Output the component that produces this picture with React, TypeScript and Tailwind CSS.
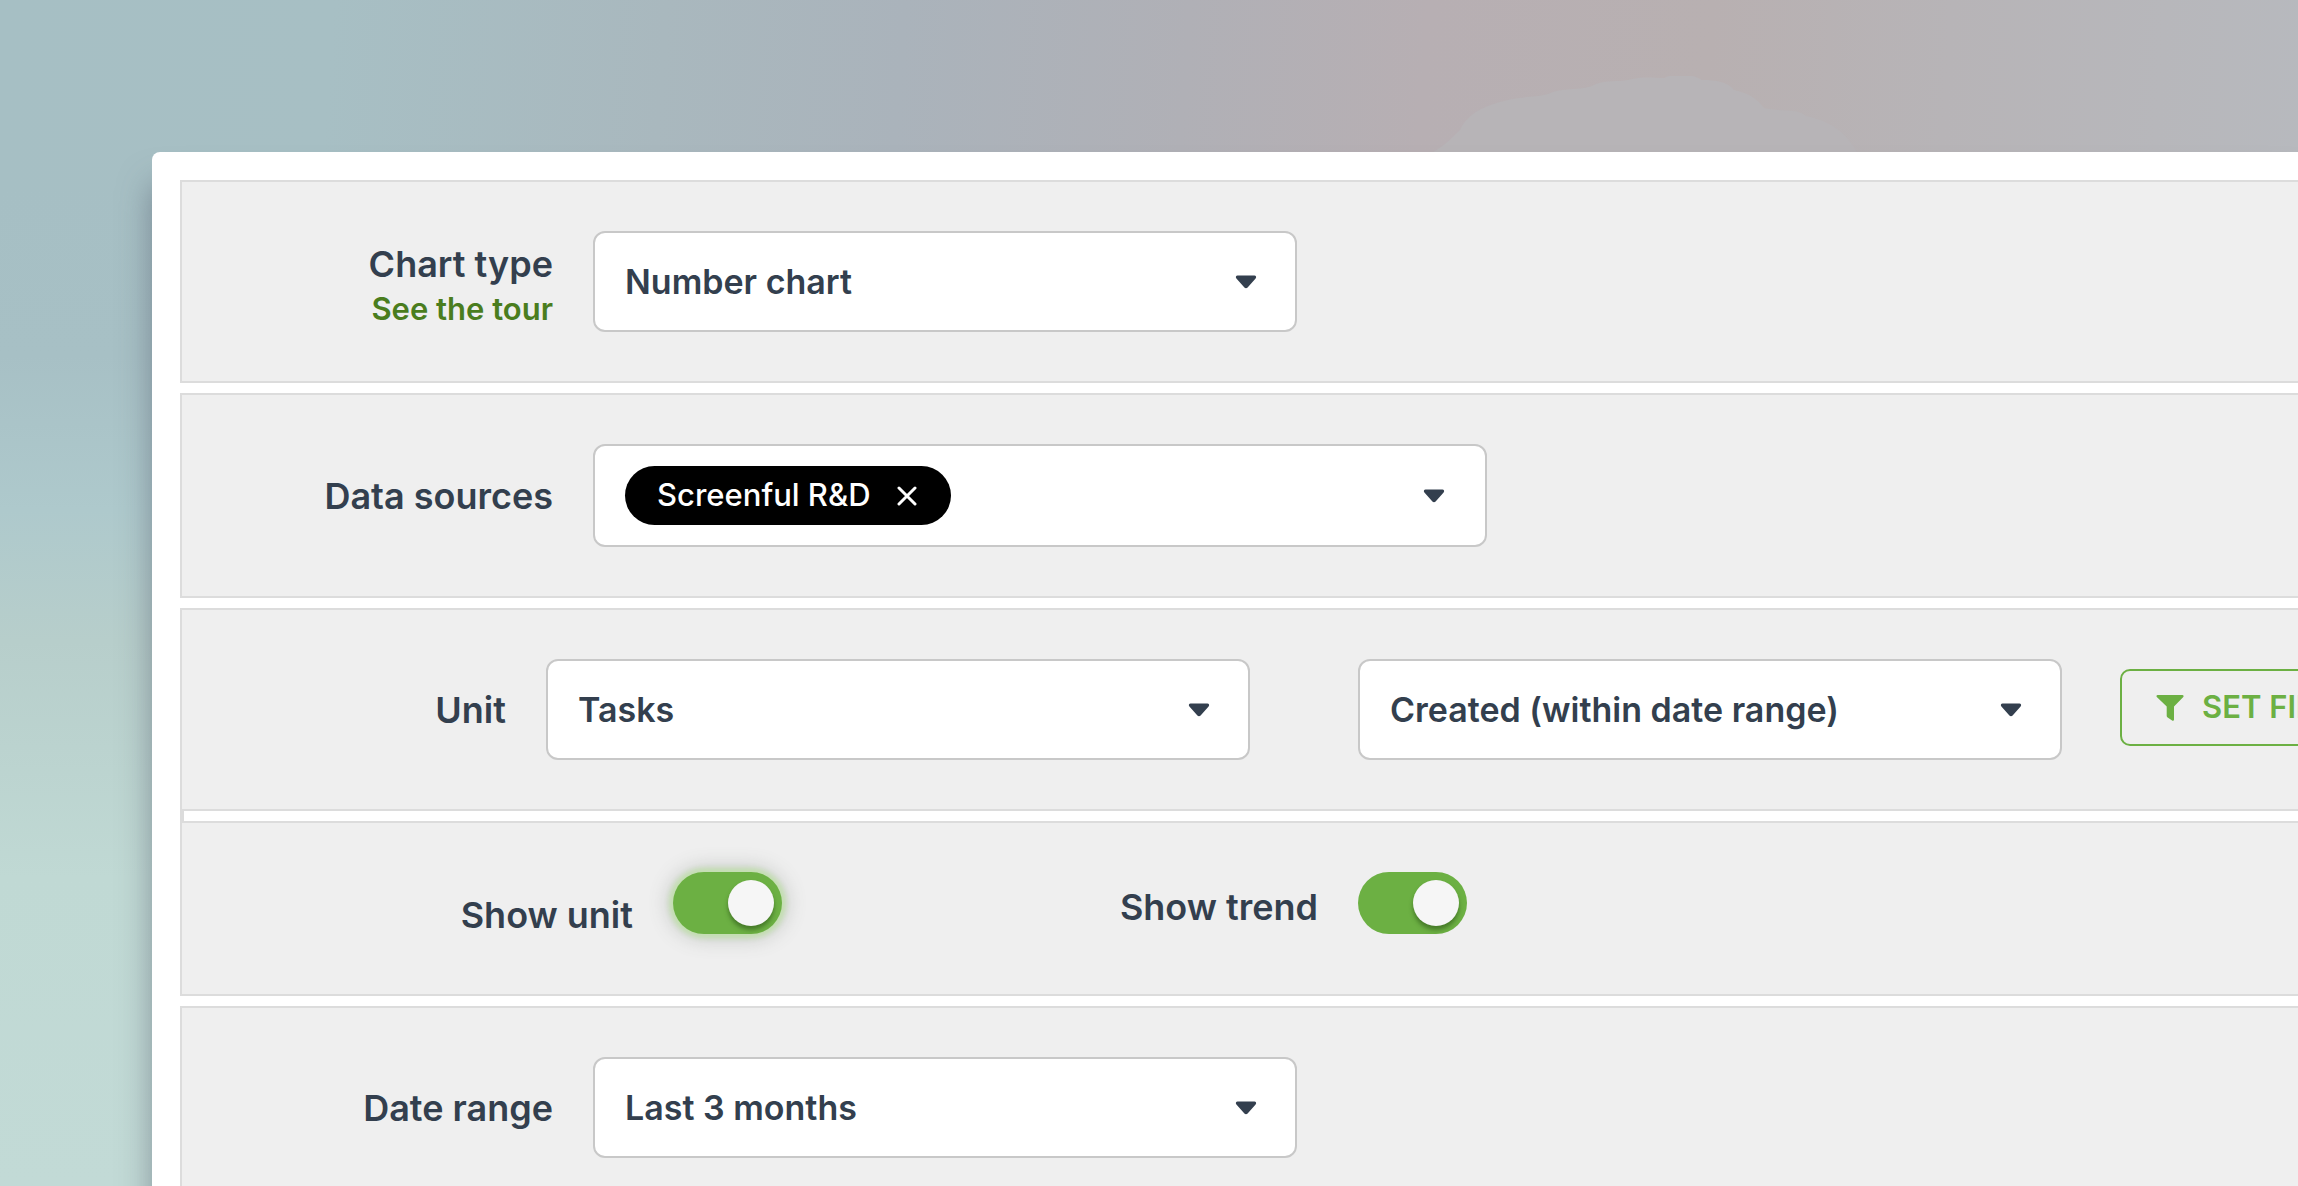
import { useState, type ReactNode } from "react";

const labelText = "text-right text-[36px] leading-[46px] font-semibold whitespace-nowrap";

function Caret() {
  return (
    <svg viewBox="0 0 22 14" aria-hidden="true" className="h-[14px] w-[22px] fill-[#333f4e]">
      <path d="M2.6 0.6h16.8c1.6 0 2.3 1.7 1.2 2.9l-8 9c-.9 1-2.3 1-3.2 0l-8-9C.3 2.3 1 .6 2.6.6z" />
    </svg>
  );
}

function FilterIcon() {
  return (
    <svg viewBox="0 0 28 28" aria-hidden="true" className="size-7 shrink-0 fill-[#6cb043]">
      <path d="M1.6 1h24.8c1.1 0 1.6 1.1.9 1.9L18 12.600v13c0 1-1.100 1.600-1.900 1l-4.800-3.400c-.4-.3-.6-.7-.6-1.100v-9.500L.8 2.900C.1 2.100.5 1 1.600 1z" />
    </svg>
  );
}

function SelectField({ id, value, options }: { id: string; value: string; options: string[] }) {
  return (
    <div className="relative w-[704px] shrink-0">
      <select
        id={id}
        aria-label={id}
        defaultValue={value}
        className="h-[101px] w-full appearance-none rounded-xl border-2 border-[#c8c8c8] bg-white pr-20 pl-[30px] text-[34px] font-semibold text-[#333f4e]"
      >
        {options.map((o) => (
          <option key={o}>{o}</option>
        ))}
      </select>
      <span className="pointer-events-none absolute inset-y-0 right-10 flex items-center">
        <Caret />
      </span>
    </div>
  );
}

function Toggle({ id, glow = false }: { id: string; glow?: boolean }) {
  const [on, setOn] = useState(true);
  return (
    <span className="relative block h-[62px] w-[109px] shrink-0">
      <input
        id={id}
        type="checkbox"
        role="switch"
        checked={on}
        onChange={() => setOn(!on)}
        className={
          glow
            ? "block size-full appearance-none rounded-full bg-gray-400 shadow-[0_0_5px_4px_#c3dfb0,0_0_20px_4px_rgba(90,100,90,0.3)] checked:bg-[#6cb043]"
            : "block size-full appearance-none rounded-full bg-gray-400 checked:bg-[#6cb043]"
        }
      />
      <span
        className={
          on
            ? "pointer-events-none absolute top-2 right-2 size-[46px] rounded-full bg-[#f6f6f6] shadow-[0_4px_4px_rgba(40,80,20,0.55)]"
            : "pointer-events-none absolute top-2 left-2 size-[46px] rounded-full bg-[#f6f6f6] shadow-[0_4px_4px_rgba(40,80,20,0.55)]"
        }
      />
    </span>
  );
}

function Panel({ children }: { children: ReactNode }) {
  return <section className="border-2 border-r-0 border-[#dcdcdc] bg-[#efefef]">{children}</section>;
}

function Clouds() {
  return (
    <svg viewBox="0 0 440 80" aria-hidden="true" className="absolute top-[76px] left-[1430px] h-[80px] w-[440px] fill-[#b7b4b7]">
      <path d="M0 78c14-8 20-14 30-24 8-16 22-24 48-30 14-4 26-2 40-6 18-8 34-2 48-10 10-4 22-2 32-4 14-4 26-2 36-2 12-6 28-4 38 2 14 0 26 2 32 10 16 4 22 8 30 18 18 4 34 0 42 8 20 4 40 14 52 38z" />
    </svg>
  );
}

export default function App() {
  const [sources, setSources] = useState(["Screenful R&D"]);
  return (
    <div className="relative h-screen overflow-hidden bg-[linear-gradient(94deg,#a6bfc4_0%,#a7bfc4_14%,#a9b8be_28%,#aab3bb_38%,#b0b0b6_50%,#b7afb3_60%,#b8b0b1_72%,#b7b4b7_82%,#b7babf_100%)] font-['Inter',sans-serif] text-[#333f4e]">
      <div className="absolute inset-0 bg-[linear-gradient(180deg,rgba(166,191,196,0)_16%,#a7c0c5_30%,#aec9cc_43%,#b7cecb_54%,#c0d9d4_74%,#c2dad6_100%)]" />
      <Clouds />
      <main className="relative mt-[152px] ml-[152px] flex flex-col gap-2.5 rounded-tl-lg bg-white pt-7 pb-10 pl-7 shadow-[0_32px_32px_rgba(80,90,105,0.55)]">
        <Panel>
          <div className="flex items-center gap-10 py-[49px]">
            <div className="w-[371px] shrink-0 pt-2">
              <label htmlFor="Chart type" className={`block ${labelText}`}>
                Chart type
              </label>
              <a href="#tour" className="block text-right text-[31px] leading-[44px] font-semibold text-[#4a7d1e]">
                See the tour
              </a>
            </div>
            <SelectField id="Chart type" value="Number chart" options={["Number chart", "Bar chart"]} />
          </div>
        </Panel>

        <Panel>
          <div className="flex items-center gap-10 py-[49px]">
            <span id="sources-label" className={`w-[371px] shrink-0 ${labelText}`}>
              Data sources
            </span>
            <div
              role="group"
              aria-labelledby="sources-label"
              className="flex h-[103px] w-[894px] shrink-0 items-center justify-between rounded-xl border-2 border-[#c8c8c8] bg-white pr-10 pl-[30px]"
            >
              <div className="flex">
                {sources.map((s) => (
                  <span key={s} className="flex h-[59px] w-[326px] items-center justify-between rounded-full bg-black pr-[34px] pl-8 text-[31px] font-medium text-white">
                    {s}
                    <button type="button" aria-label={`Remove ${s}`} onClick={() => setSources(sources.filter((x) => x !== s))}>
                      <svg viewBox="0 0 20 20" aria-hidden="true" className="size-5 stroke-white stroke-3">
                        <path d="M2 2l16 16M18 2L2 18" strokeLinecap="round" />
                      </svg>
                    </button>
                  </span>
                ))}
              </div>
              <button type="button" aria-label="Choose data sources" aria-haspopup="listbox">
                <Caret />
              </button>
            </div>
          </div>
        </Panel>

        <Panel>
          <div className="flex items-center py-[49px]">
            <label htmlFor="Unit" className={`mr-10 w-[324px] shrink-0 ${labelText}`}>
              Unit
            </label>
            <SelectField id="Unit" value="Tasks" options={["Tasks", "Hours"]} />
            <div className="ml-[108px] flex shrink-0">
              <SelectField id="Measure" value="Created (within date range)" options={["Created (within date range)", "Completed (within date range)"]} />
            </div>
            <button
              type="button"
              className="mb-1 ml-[58px] flex h-[77px] shrink-0 items-center gap-[18px] rounded-[10px] border-2 border-[#6cb043] px-[34px] text-[31px] font-semibold whitespace-nowrap text-[#6cb043]"
            >
              <FilterIcon />
              SET FILTERS
            </button>
          </div>
          <div className="h-[14px] border-2 border-r-0 border-[#dcdcdc] bg-white" />
          <div className="flex items-start gap-10 pt-[49px] pb-14">
            <label htmlFor="show-unit" className={`mt-5 w-[451px] shrink-0 ${labelText}`}>
              Show unit
            </label>
            <Toggle id="show-unit" glow />
            <label htmlFor="show-trend" className={`mt-3 w-[496px] shrink-0 ${labelText}`}>
              Show trend
            </label>
            <Toggle id="show-trend" />
          </div>
        </Panel>

        <Panel>
          <div className="flex items-center gap-10 py-[49px]">
            <label htmlFor="Date range" className={`w-[371px] shrink-0 ${labelText}`}>
              Date range
            </label>
            <SelectField id="Date range" value="Last 3 months" options={["Last 3 months", "Last 6 months"]} />
          </div>
        </Panel>
      </main>
    </div>
  );
}
